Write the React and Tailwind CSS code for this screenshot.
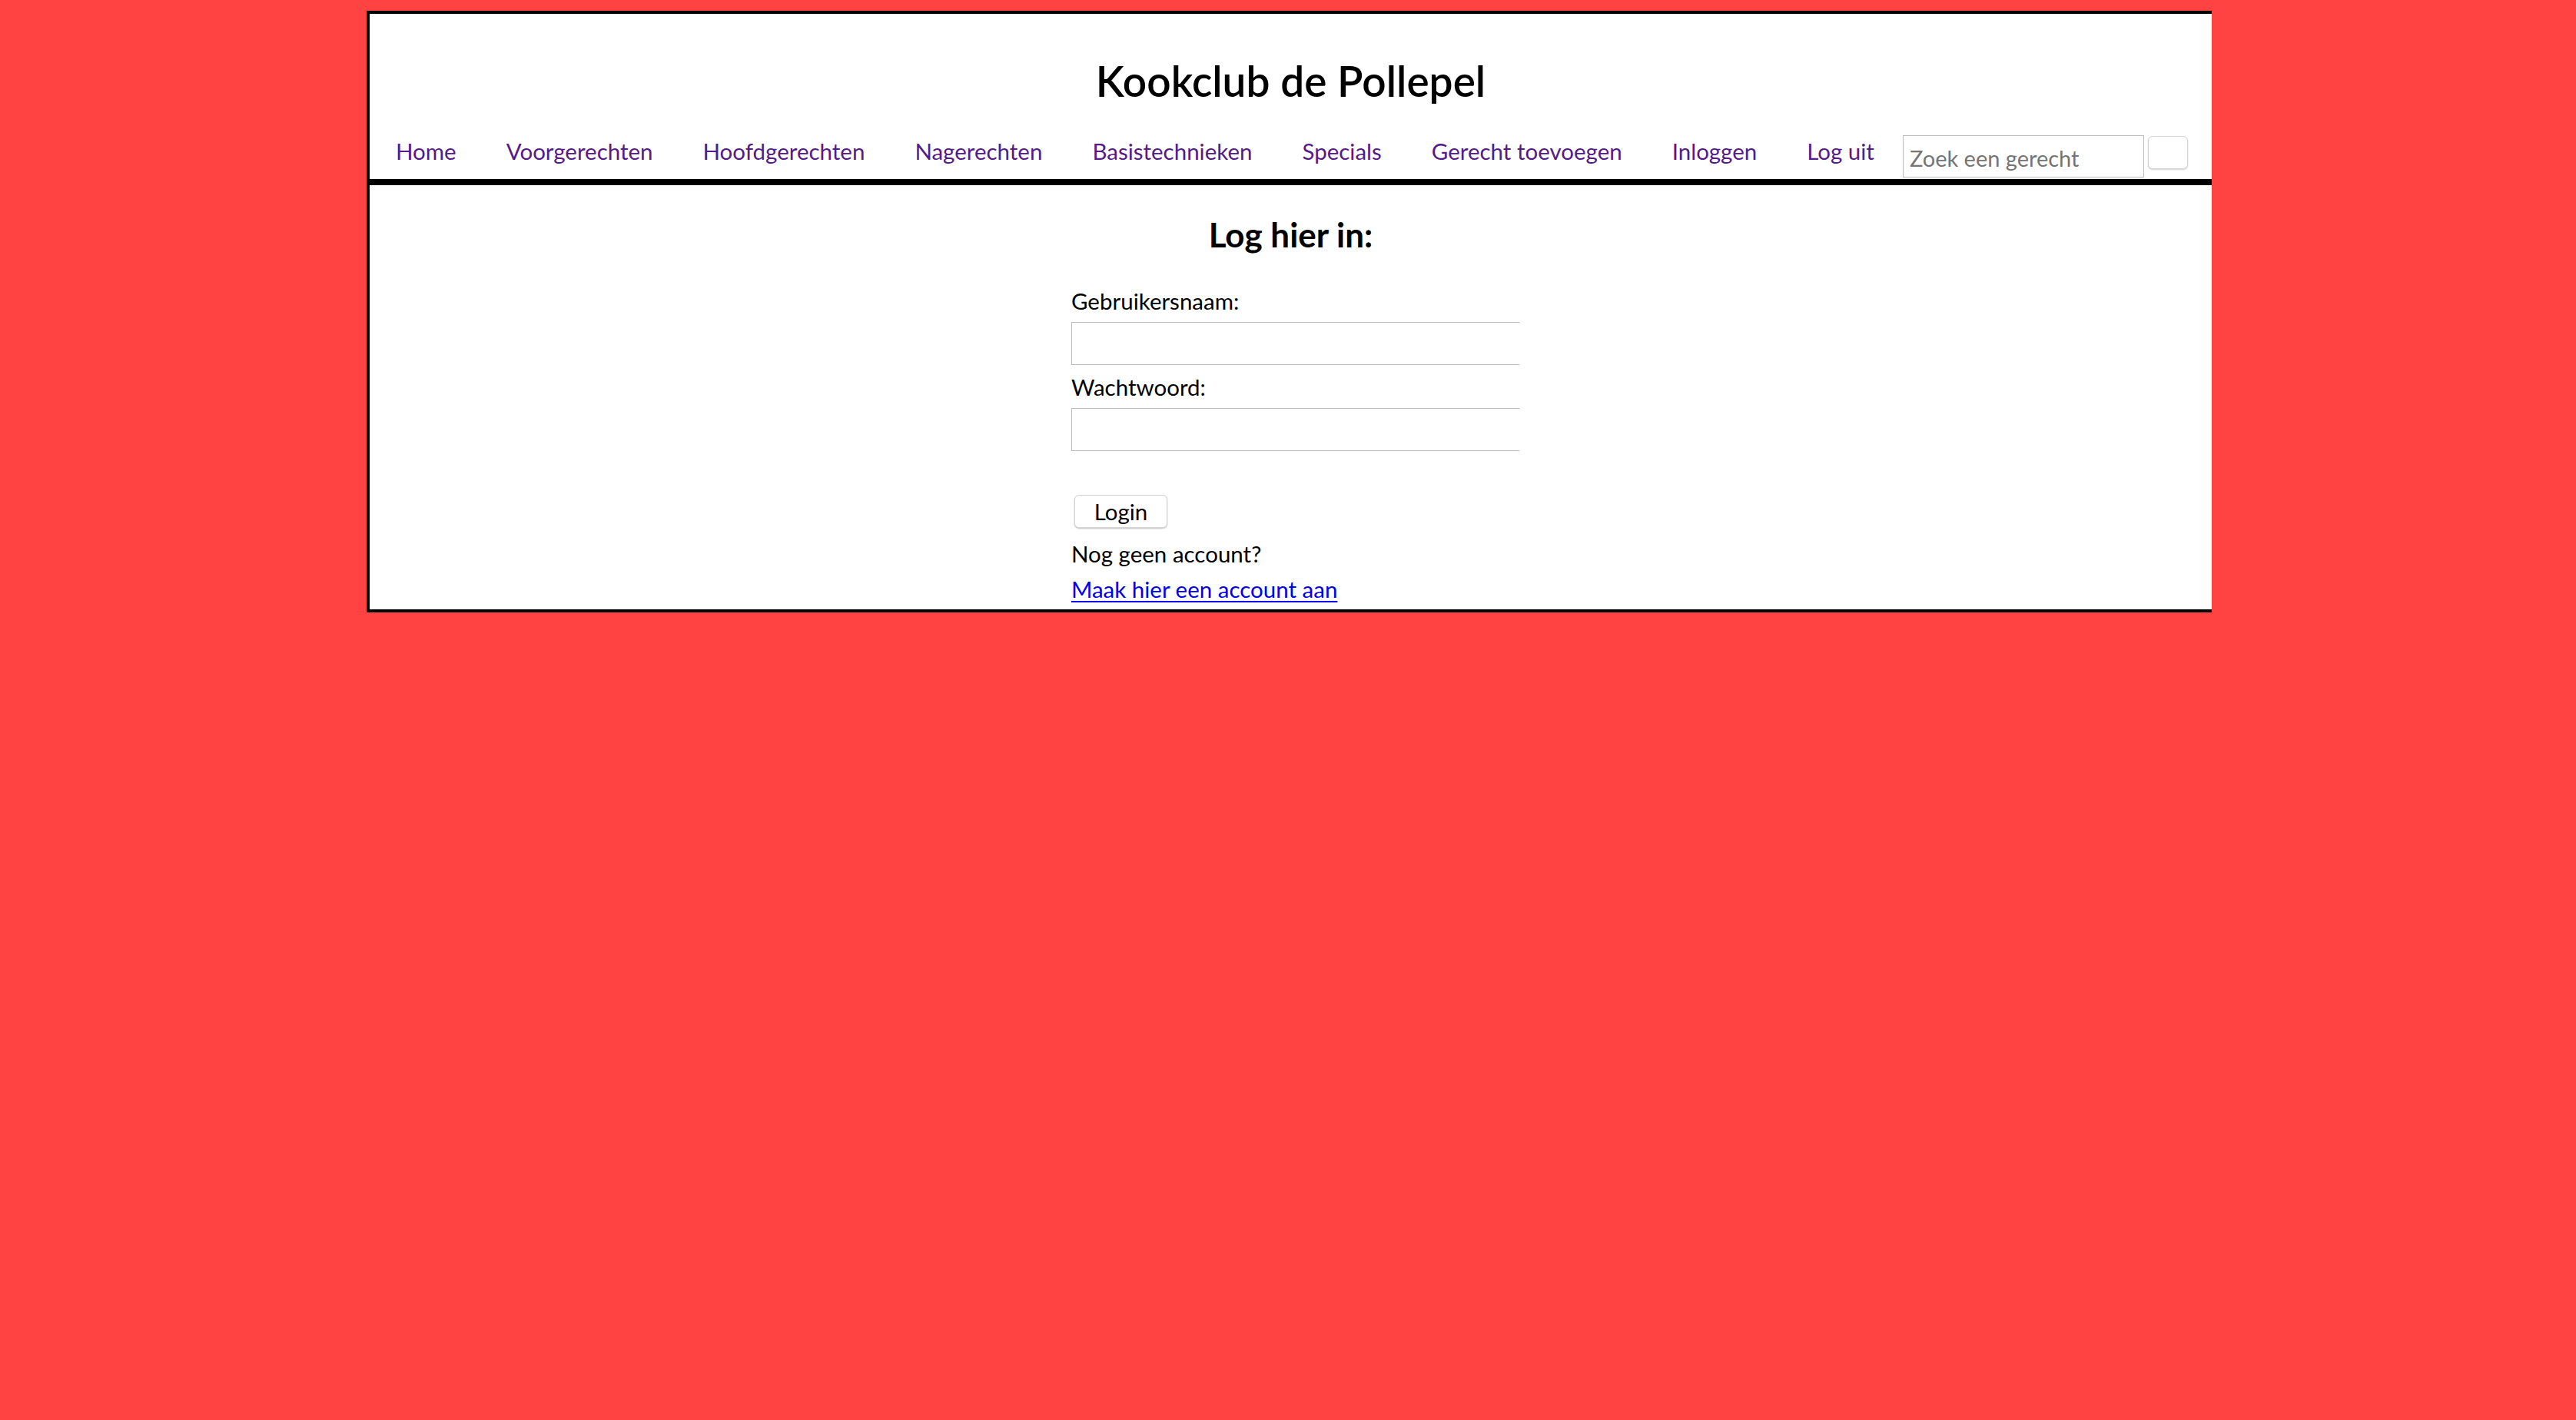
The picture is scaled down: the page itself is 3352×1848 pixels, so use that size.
const navLinks = [
  'Home',
  'Voorgerechten',
  'Hoofdgerechten',
  'Nagerechten',
  'Basistechnieken',
  'Specials',
  'Gerecht toevoegen',
  'Inloggen',
  'Log uit',
];

// Kopregel met titel, menu en zoekveld
const Header = () => (
  <header className="border-b-8 border-black pb-[2px]">
    <h1 className="mt-[60px] text-center text-[55px] leading-[54px] font-semibold text-black">
      Kookclub de Pollepel
    </h1>
    <nav className="mt-[44px] flex items-start pl-[34px]">
      <ul className="flex gap-[65px]">
        {navLinks.map((link) => (
          <li key={link}>
            <a href="#" className="mt-[1px] block text-[29.5px] leading-[40px] text-[#551a8b]">
              {link}
            </a>
          </li>
        ))}
      </ul>
      <input
        type="text"
        placeholder="Zoek een gerecht"
        className="ml-[37px] h-[55px] w-[314px] border border-[#bdbdbd] bg-white px-[8px] pt-[4px] text-[29px] text-black placeholder:text-[#757575] outline-none"
      />
      <button className="ml-[5px] mt-[1px] h-[43px] w-[52px] rounded-[6px] border border-[#d4d4d4] bg-white shadow-[0_1px_2px_rgba(0,0,0,0.2)]" />
    </nav>
  </header>
);

// Inlogformulier
const LoginForm = () => (
  <main className="pt-[39px] pb-[3px]">
    <h2 className="text-center text-[44px] leading-[50px] font-bold text-black">Log hier in:</h2>
    <form className="ml-[913px] w-[583px] overflow-hidden" onSubmit={(e) => e.preventDefault()}>
      <label className="mt-[39px] block text-[29.5px] leading-[46px] text-black">Gebruikersnaam:</label>
      <input type="text" className="mt-[4px] block h-[56px] w-[700px] border border-[#bdbdbd] bg-white" />
      <label className="mt-[6px] block text-[29.5px] leading-[46px] text-black">Wachtwoord:</label>
      <input type="password" className="mt-[4px] block h-[56px] w-[700px] border border-[#bdbdbd] bg-white" />
      <button
        type="submit"
        className="mt-[57px] ml-[4px] block h-[43px] w-[121px] rounded-[6px] border border-[#d4d4d4] bg-white text-[29.5px] leading-[40px] text-black shadow-[0_1px_2px_rgba(0,0,0,0.25)]"
      >
        Login
      </button>
      <p className="mt-[11px] text-[29.5px] leading-[46px] text-black">Nog geen account?</p>
      <a href="#" className="block text-[29.5px] leading-[46px] text-[#0000ee] underline underline-offset-[4px]">
        Maak hier een account aan
      </a>
    </form>
  </main>
);

export default function App() {
  return (
    <div className="min-h-screen bg-[#ff4242] pt-[14px] font-['Lato',sans-serif]">
      <div className="ml-[477px] w-[2401px] border-l-4 border-t-4 border-b-4 border-black bg-white">
        <Header />
        <LoginForm />
      </div>
    </div>
  );
}
